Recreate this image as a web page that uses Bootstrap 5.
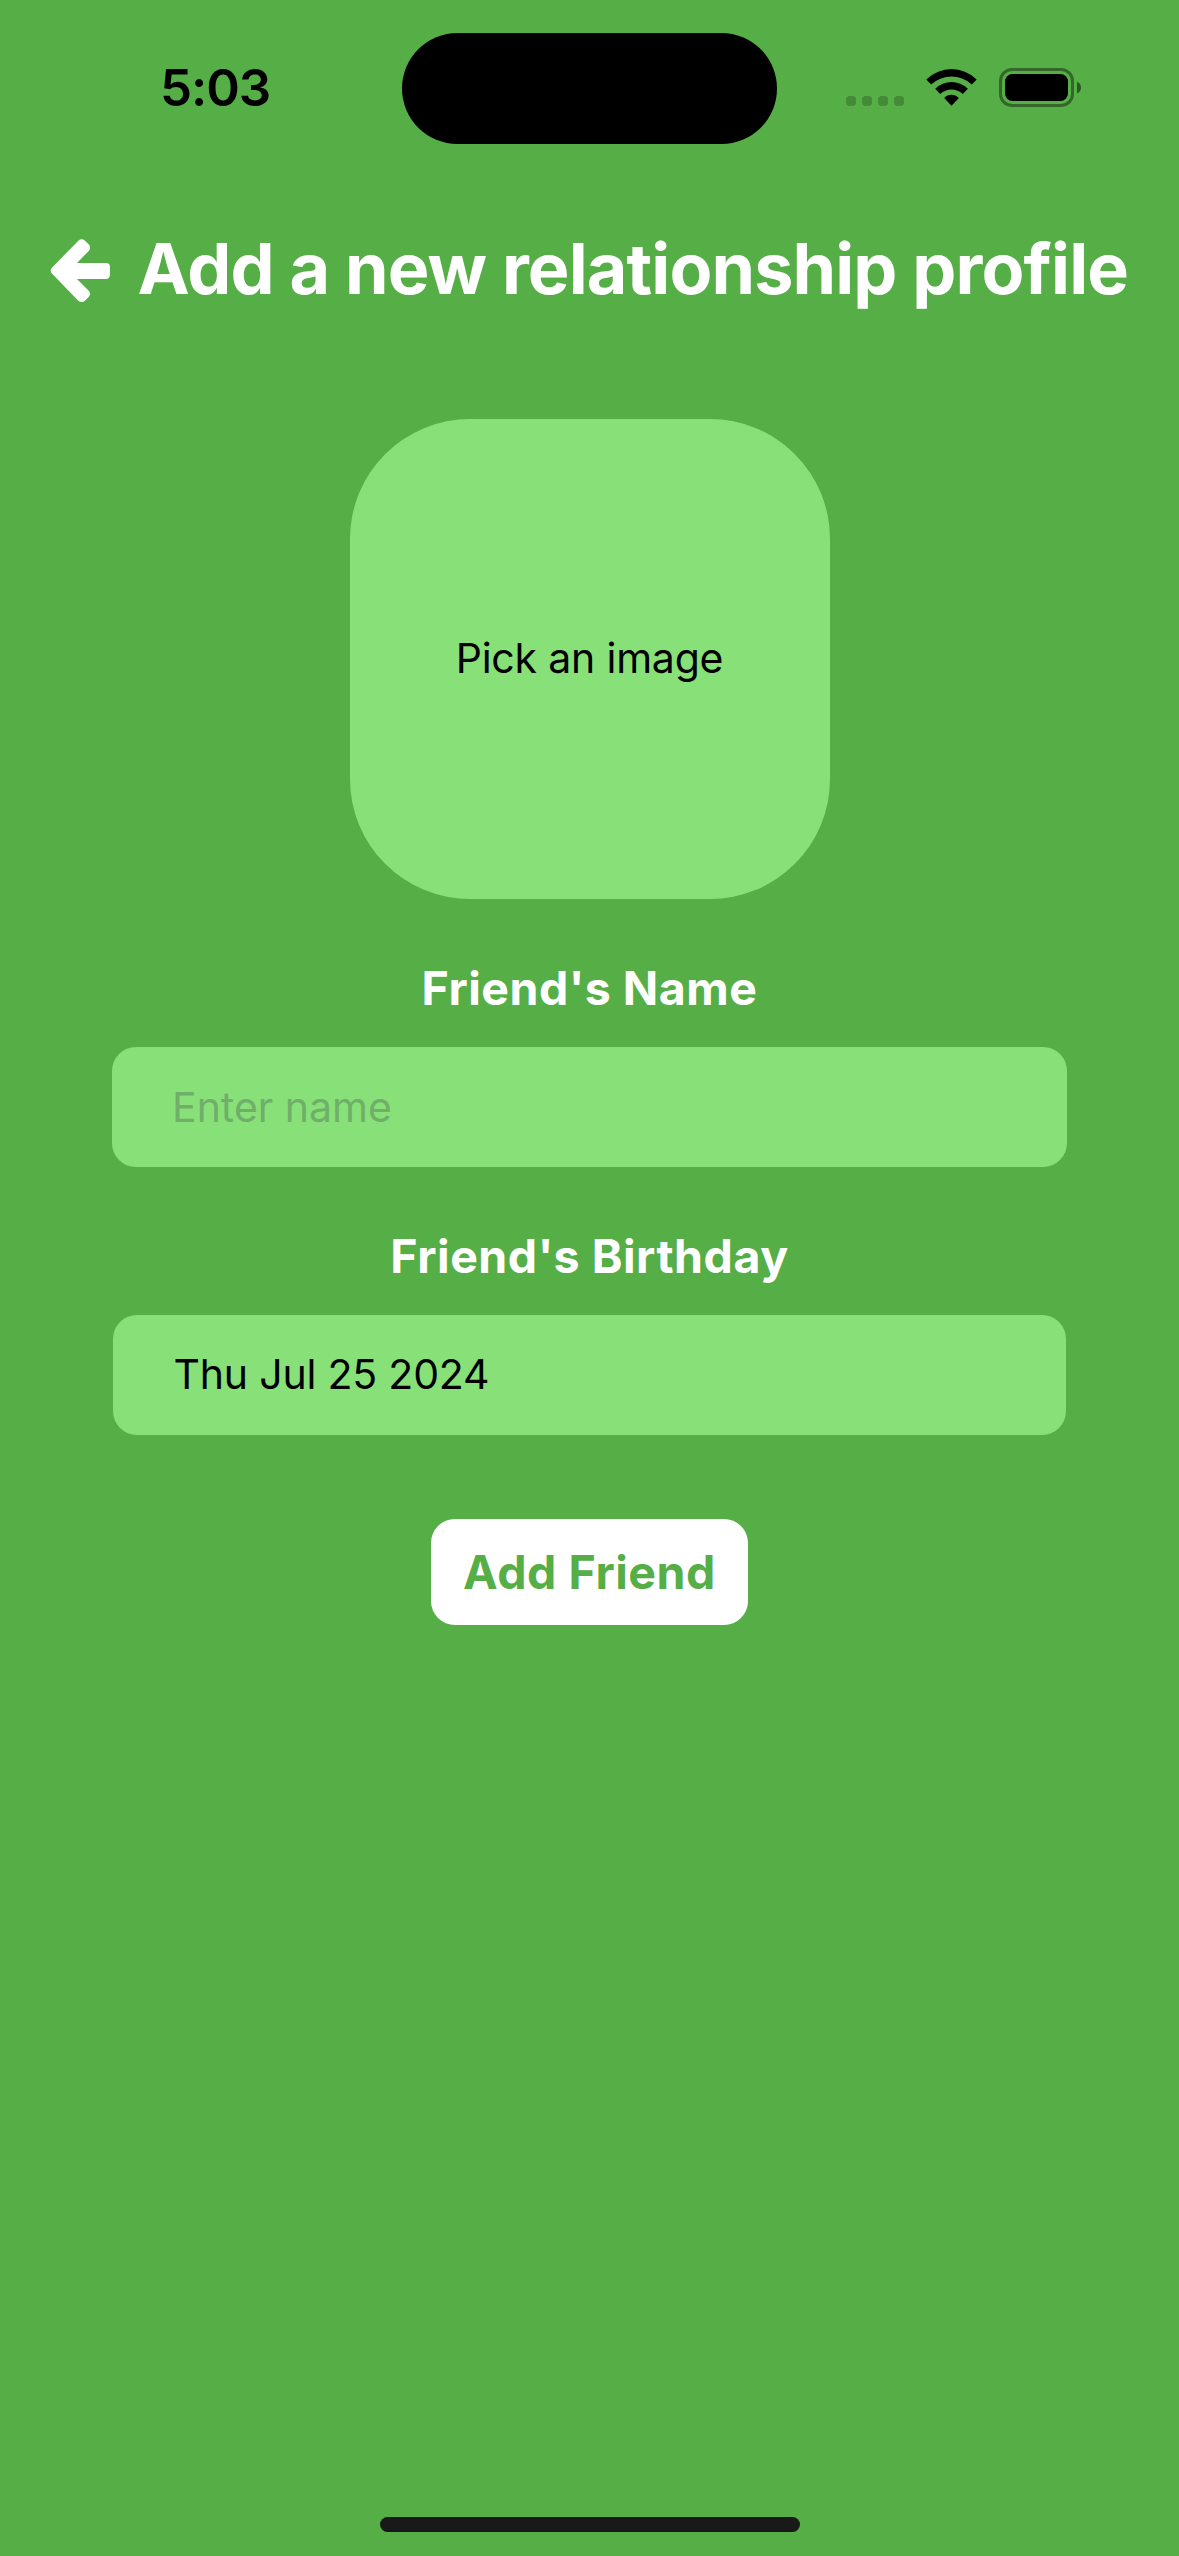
<!DOCTYPE html>
<html lang="en">
<head>
<meta charset="utf-8">
<meta name="viewport" content="width=device-width, initial-scale=1">
<title>Add a new relationship profile</title>
<link href="https://cdn.jsdelivr.net/npm/bootstrap@5.3.0/dist/css/bootstrap.min.css" rel="stylesheet">
<style>
  :root { --leaf: #56ae46; --mint: #88e178; }
  body { font-family: Inter, "Liberation Sans", sans-serif; background: var(--leaf); color: #000; }
  .screen { width: 1179px; height: 2556px; }
  .status { height: 177px; }
  .clock-side { width: 402px; height: 111px; margin-top: 32px; padding-left: 160px; font-size: 51px; font-weight: 600; letter-spacing: -1.1px; line-height: 111px; }
  .island { width: 375px; height: 111px; margin-top: 33px; border-radius: 56px; }
  .signals { margin: 66px 0 0 67px; }
  .topbar { height: 187px; padding-left: 50px; }
  .page-title { margin-left: 26.5px; padding-bottom: 4px; font-size: 70px; font-weight: 700; letter-spacing: -.87px; line-height: 86px; }
  .photo { width: 480px; height: 480px; margin-top: 55px; border-radius: 120px; background: var(--mint); font-size: 41px; letter-spacing: -.2px; }
  .field-label { margin: 60px 0 30px; font-size: 46.5px; font-weight: 700; letter-spacing: .52px; line-height: 58px; }
  .field, .field:focus { height: 120px; border: 0; border-radius: 24px; background: var(--mint); color: #000; font-size: 41px; line-height: 60px; padding: 0 60px; }
  .field-name { width: 955px; }
  .field-name::placeholder { color: #70af69; opacity: 1; }
  .field-date { width: 953px; padding: 0 60.5px 2px; letter-spacing: -.2px; }
  .btn-add, .btn-add:hover { width: 317px; height: 106px; margin-top: 84px; padding: 0; border: 0; border-radius: 24px; background: #fff; color: var(--leaf); font-size: 46.5px; font-weight: 700; letter-spacing: .53px; line-height: 106px; }
  .home-bar { width: 420px; height: 15px; margin-bottom: 24px; background: #191919; }
</style>
</head>
<body>
<div class="screen d-flex flex-column overflow-hidden">
  <div class="status d-flex align-items-start flex-shrink-0">
    <div class="clock-side">5:03</div>
    <div class="island bg-black"></div>
    <svg class="signals" width="240" height="44" viewBox="844 66 240 44" aria-hidden="true">
      <g opacity=".2">
        <rect x="846" y="96" width="10" height="10" rx="4"/><rect x="862" y="96" width="10" height="10" rx="4"/>
        <rect x="878" y="96" width="10" height="10" rx="4"/><rect x="894" y="96" width="10" height="10" rx="4"/>
      </g>
      <path d="M926.3 79.5Q937.5 69 951.5 69Q965.500 69 976.700 79.500L971.800 84.500Q962.500 76.600 951.500 76.600Q940.500 76.600 931.200 84.500Z"/>
      <path d="M935.200 88.700Q942.300 82 951.500 82Q960.700 82 967.900 88.700L962.900 93.900Q957.800 89.400 951.500 89.400Q945.200 89.400 940.100 93.900Z"/>
      <path d="M944.200 98Q947.300 94.800 951.500 94.800Q955.700 94.800 958.900 98L951.500 105.800Z"/>
      <rect x="1000.500" y="69.500" width="72" height="36" rx="11.500" fill="none" stroke="#000" stroke-width="3" opacity=".4"/>
      <rect x="1005" y="74" width="63" height="27" rx="7.500"/>
      <path d="M1077 81.500Q1081 83.500 1081 87.500Q1081 91.500 1077 93.500Z" opacity=".5"/>
    </svg>
  </div>

  <header class="topbar d-flex align-items-center flex-shrink-0 text-white">
    <svg class="flex-shrink-0" width="61" height="64" viewBox="60 57 183 192" role="img" aria-label="Back">
      <path fill="#fff" d="M65 144L145 62Q155 54 165 62L176 73Q184 82 177 92L141 129H228Q240 129 240 141V163Q240 177 228 177H141L177 213Q184 222 176 231L165 242Q155 250 145 242L65 160Q59 152 65 144Z"/>
    </svg>
    <h1 class="page-title mb-0 text-nowrap">Add a new relationship profile</h1>
  </header>

  <main class="d-flex flex-column align-items-center flex-grow-1">
    <div class="photo d-flex align-items-center justify-content-center flex-shrink-0">Pick an image</div>
    <label class="field-label text-white" for="friendName">Friend's Name</label>
    <input class="form-control field field-name" id="friendName" type="text" placeholder="Enter name">
    <div class="field-label text-white">Friend's Birthday</div>
    <div class="field field-date d-flex align-items-center">Thu Jul 25 2024</div>
    <button class="btn btn-add" type="button">Add Friend</button>
  </main>

  <div class="home-bar rounded-pill align-self-center flex-shrink-0"></div>
</div>
<script src="https://cdn.jsdelivr.net/npm/bootstrap@5.3.0/dist/js/bootstrap.bundle.min.js"></script>
</body>
</html>
